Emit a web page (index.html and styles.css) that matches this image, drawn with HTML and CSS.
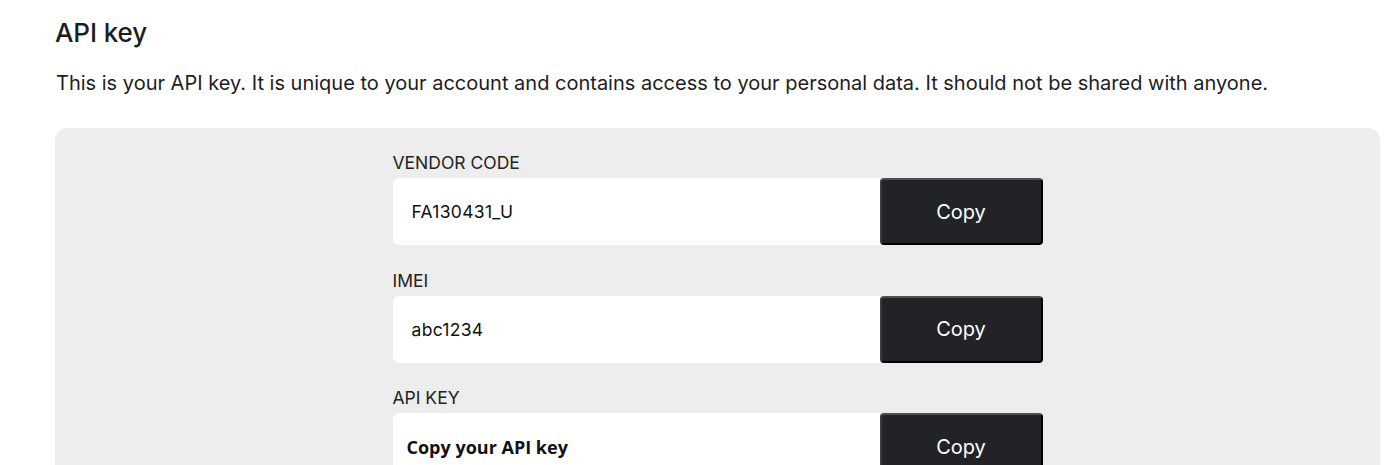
FILE: index.html
```html
<!DOCTYPE html>
<html>
<head>
<meta charset="utf-8">
<link rel="stylesheet" href="styles.css">
</head>
<body>
<main class="page">
  <h1 class="title">API key</h1>
  <p class="intro">This is your API key. It is unique to your account and contains access to your personal data. It should not be shared with anyone.</p>
  <section class="panel">
    <div class="form">
      <div class="field">
        <label class="label">VENDOR CODE</label>
        <div class="row">
          <div class="value">FA130431_U</div>
          <button class="copy">Copy</button>
        </div>
      </div>
      <div class="field">
        <label class="label">IMEI</label>
        <div class="row">
          <div class="value">abc1234</div>
          <button class="copy">Copy</button>
        </div>
      </div>
      <div class="field">
        <label class="label">API KEY</label>
        <div class="row">
          <div class="value value-bold">Copy your API key</div>
          <button class="copy">Copy</button>
        </div>
      </div>
    </div>
  </section>
</main>
</body>
</html>
```
FILE: styles.css
```css
html, body {
  margin: 0;
  padding: 0;
  background: #ffffff;
}
body {
  font-family: Inter, "Liberation Sans", sans-serif;
  color: #1d1d1f;
}
.page {
  padding: 16px 16px 0 55px;
}
.title {
  margin: 0;
  font-size: 26px;
  font-weight: 500;
  line-height: 34px;
  letter-spacing: -0.1px;
}
.intro {
  margin: 18px 0 0 1px;
  font-size: 20px;
  line-height: 30px;
}
.panel {
  margin-top: 30px;
  background: #ededed;
  border-radius: 12px;
  height: 400px;
  display: flex;
  justify-content: center;
  padding-top: 24px;
  box-sizing: border-box;
}
.form {
  width: 650px;
  display: flex;
  flex-direction: column;
  gap: 24.5px;
}
.field {
  display: flex;
  flex-direction: column;
  gap: 4px;
}
.label {
  font-size: 17.5px;
  line-height: 22px;
  color: #222;
}
.row {
  display: flex;
  height: 67px;
}
.value {
  flex: 1;
  background: #fff;
  border-radius: 6px 0 0 6px;
  display: flex;
  align-items: center;
  padding-left: 19px;
  font-size: 17.5px;
  letter-spacing: 0.3px;
  color: #111;
}
.value-bold {
  font-family: "Open Sans", sans-serif;
  font-weight: 700;
  padding-left: 14px;
  font-size: 18px;
  letter-spacing: 0;
}
.copy {
  width: 163px;
  background: #222327;
  color: #fff;
  font-family: Inter, "Liberation Sans", sans-serif;
  font-size: 20px;
  border: 2px solid #000;
  border-top-color: #4e4f52;
  border-left-color: #3a3b3e;
  border-radius: 4px;
  padding: 0;
}
```
